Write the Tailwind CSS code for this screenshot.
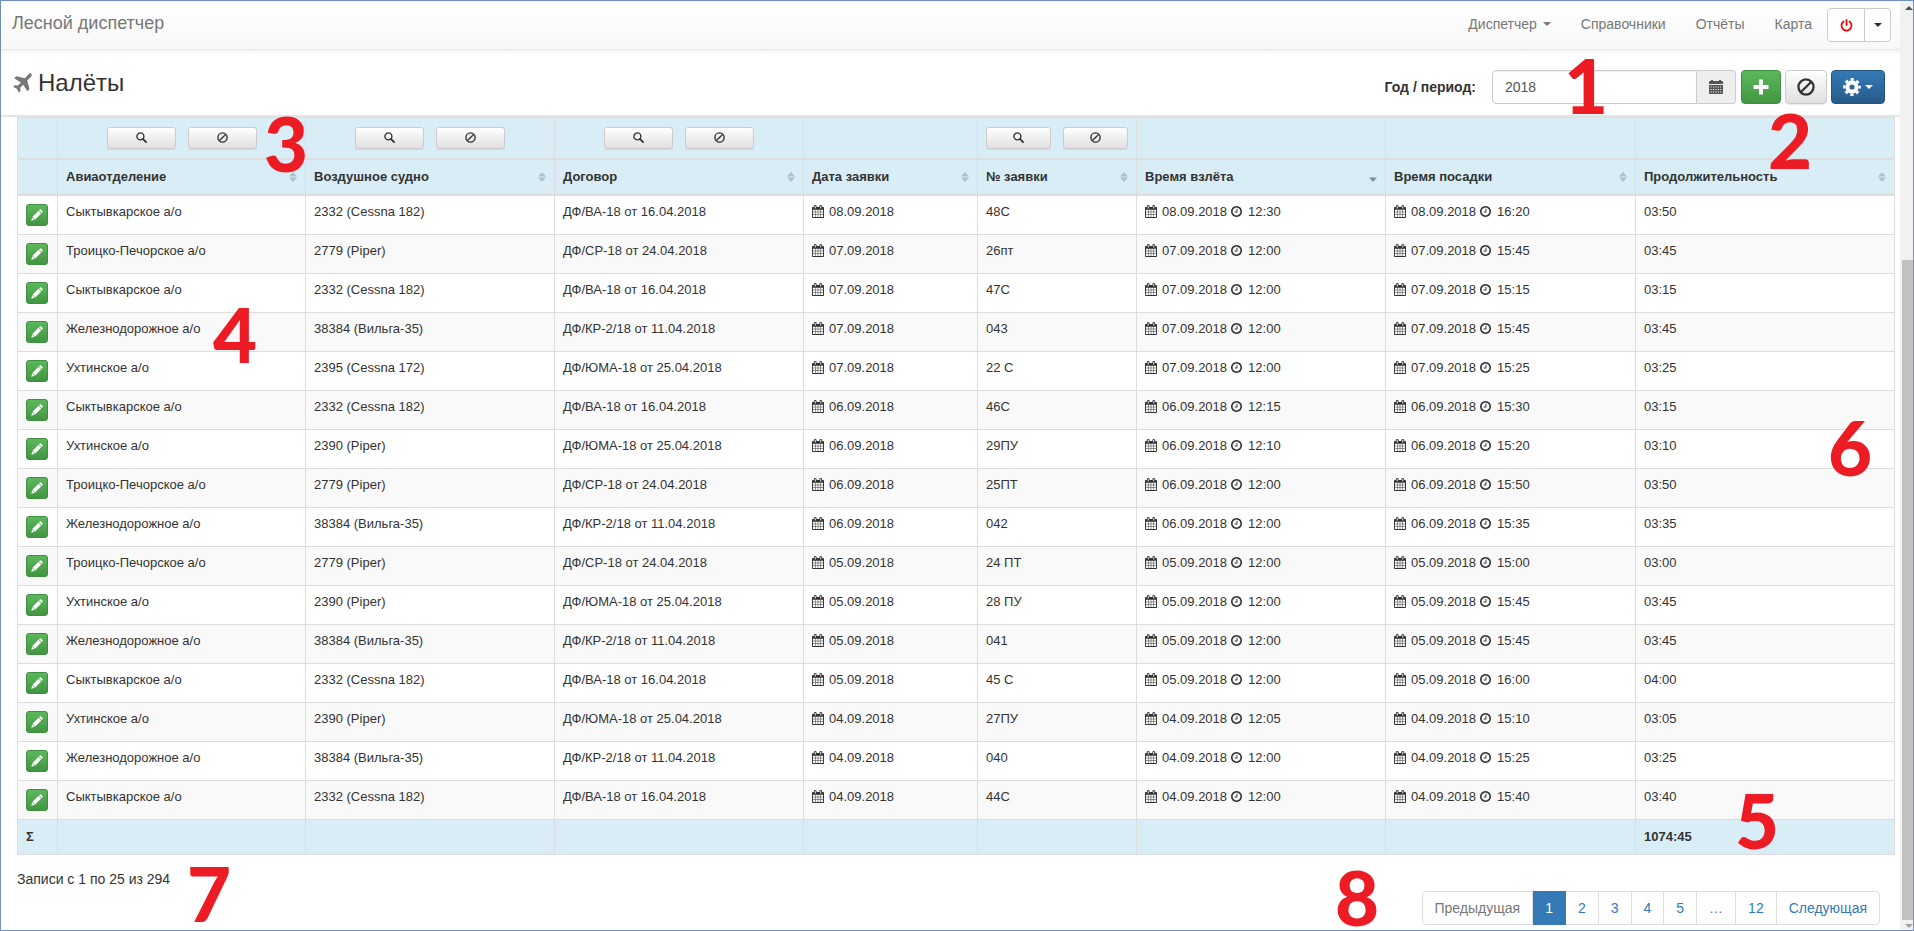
<!DOCTYPE html>
<html lang="ru">

<head>
    <meta charset="UTF-8">
    <meta name="viewport" content="width=device-width, initial-scale=1.0">
    <title>Лесной диспетчер - Налёты</title>
    <script src="https://cdn.jsdelivr.net/npm/@tailwindcss/browser@4"></script>
</head>

<body class="bg-white font-['Liberation_Sans',Arial,sans-serif] text-sm leading-5 text-[#333]">
    <!-- Icons -->
    <svg class="hidden" xmlns="http://www.w3.org/2000/svg">
        <symbol id="i-calendar" viewBox="64 0 1664 1792">
            <path fill="currentColor"
                d="M192 1664h288v-288h-288v288zm352 0h320v-288h-320v288zm-352-352h288v-320h-288v320zm352 0h320v-320h-320v320zm-352-384h288v-288h-288v288zm736 736h320v-288h-320v288zm-384-736h320v-288h-320v288zm768 736h288v-288h-288v288zm-384-352h320v-320h-320v320zm-352-864v-288q0-13-9.500-22.500t-22.500-9.500h-64q-13 0-22.500 9.500t-9.500 22.500v288q0 13 9.500 22.500t22.500 9.500h64q13 0 22.500-9.500t9.500-22.500zm736 864h288v-320h-288v320zm-384-384h320v-288h-320v288zm384 0h288v-288h-288v288zm32-480v-288q0-13-9.500-22.500t-22.500-9.500h-64q-13 0-22.500 9.500t-9.500 22.500v288q0 13 9.500 22.500t22.500 9.500h64q13 0 22.500-9.500t9.500-22.500zm384-64v1280q0 52-38 90t-90 38h-1408q-52 0-90-38t-38-90v-1280q0-52 38-90t90-38h128v-96q0-66 47-113t113-47h64q66 0 113 47t47 113v96h384v-96q0-66 47-113t113-47h64q66 0 113 47t47 113v96h128q52 0 90 38t38 90z" />
        </symbol>
        <symbol id="i-clock" viewBox="128 128 1536 1536">
            <path fill="currentColor"
                d="M1024 544v448q0 14-9 23t-23 9h-320q-14 0-23-9t-9-23v-64q0-14 9-23t23-9h224v-352q0-14 9-23t23-9h64q14 0 23 9t9 23zm416 352q0-148-73-273t-198-198-273-73-273 73-198 198-73 273 73 273 198 198 273 73 273-73 198-198 73-273zm224 0q0 209-103 385.500t-279.500 279.500-385.500 103-385.500-103-279.500-279.500-103-385.500 103-385.500 279.500-279.500 385.500-103 385.500 103 279.500 279.500 103 385.500z" />
        </symbol>
        <symbol id="i-pencil" viewBox="0 0 12 12">
            <path fill="currentColor"
                d="M8 1.300 8.900.5q.6-.6 1.200 0l1.400 1.400q.6.600 0 1.200l-.8.900zM7.500 1.800l2.700 2.700-6 6-2.700-2.700zM1.200 8.300l2.500 2.500-3.400.9z" />
        </symbol>
        <symbol id="i-search" viewBox="0 0 12 12">
            <circle cx="4.800" cy="4.800" r="3.800" fill="none" stroke="currentColor" stroke-width="1.500" />
            <path d="M7.500 7.500 11 11" stroke="currentColor" stroke-width="2" stroke-linecap="round" />
        </symbol>
        <symbol id="i-ban" viewBox="0 0 16 16">
            <circle cx="8" cy="8" r="6.700" fill="none" stroke="currentColor" stroke-width="2" />
            <path d="M3.500 12.500 12.500 3.500" stroke="currentColor" stroke-width="2" />
        </symbol>
        <symbol id="i-sort" viewBox="0 0 8 10">
            <path fill="currentColor" d="M0 4.500 4 0l4 4.500zM0 5.500h8L4 10z" />
        </symbol>
        <symbol id="i-sort-desc" viewBox="0 0 8 10">
            <path fill="currentColor" d="M0 5.500h8L4 10z" />
        </symbol>
        <symbol id="i-caret" viewBox="0 0 8 4">
            <path fill="currentColor" d="M0 0h8L4 4z" />
        </symbol>
    </svg>

    <div class="relative flex min-h-screen border border-[#6f92c2]">
        <div class="min-w-0 flex-1">
            <!-- Navbar -->
            <nav
                class="flex h-[49px] items-center justify-between border-b border-[#e7e7e7] bg-linear-to-b from-white to-[#f8f8f8] pr-[9px] pl-[11px] text-[#777] shadow-[0_1px_5px_rgba(0,0,0,0.075)]">
                <a href="#" class="pb-1 text-lg">Лесной диспетчер</a>
                <div class="flex items-center">
                    <a href="#" class="flex items-center gap-1.5 px-[15px] pb-0.5">Диспетчер
                        <svg class="h-1 w-2">
                            <use href="#i-caret" />
                        </svg>
                    </a>
                    <a href="#" class="px-[15px] pb-0.5">Справочники</a>
                    <a href="#" class="px-[15px] pb-0.5">Отчёты</a>
                    <a href="#" class="px-[15px] pb-0.5">Карта</a>
                    <div class="flex h-[34px] rounded border border-[#ccc] bg-white">
                        <button type="button" aria-label="Выход"
                            class="flex w-[37px] items-center justify-center border-r border-[#ccc] text-[#f00]">
                            <svg class="size-[13px]" viewBox="0 0 13 13" fill="none" stroke="currentColor"
                                stroke-width="1.800" stroke-linecap="round">
                                <path d="M6.500 1v5M3.600 2.500a5 5 0 1 0 5.800 0" />
                            </svg>
                        </button>
                        <button type="button" aria-label="Меню"
                            class="flex w-[25px] items-center justify-center text-[#333]">
                            <svg class="h-1 w-2">
                                <use href="#i-caret" />
                            </svg>
                        </button>
                    </div>
                </div>
            </nav>

            <!-- Page header -->
            <header class="flex h-[67px] items-center justify-between border-b-2 border-[#e5e5e5] pr-[15px] pl-[11px]">
                <h1 class="flex items-center gap-1.5 text-2xl">
                    <svg class="size-5 text-[#777]" viewBox="0 0 20 20">
                        <path fill="currentColor"
                            d="M19.300.7c.9.9.500 2.200-.3 3l-3.700 3.700 2.200 8.600-2 2.200-4.300-6.400-3 3 .3 3.200-1.600 1.700-2-3.900L1 13.800l1.700-1.600 3.200.3 3-3L2.200 5.200 4.300 3.200l8.600 2 3.500-3.700c.8-.8 2.100-1.600 2.900-.8z" />
                    </svg>
                    Налёты
                </h1>
                <div class="flex items-center pt-2">
                    <label for="period" class="mr-4 font-bold">Год / период:</label>
                    <input id="period" type="text" value="2018"
                        class="h-[34px] w-[205px] rounded-l border border-[#ccc] px-3 text-[#555] shadow-[inset_0_1px_1px_rgba(0,0,0,0.075)]">
                    <button type="button" aria-label="Календарь"
                        class="mr-[5px] flex h-[34px] w-[39px] items-center justify-center rounded-r border border-l-0 border-[#ccc] bg-[#eee] text-[#555]">
                        <svg class="size-3.5" viewBox="0 0 14 14">
                            <path fill="currentColor"
                                d="M0 2q0-1 1-1h1V0h2v1h6V0h2v1h1q1 0 1 1v2H0zM0 5h14v8q0 1-1 1H1q-1 0-1-1z" />
                            <path d="M1.500 7h11M1.500 9.500h11M1.500 12h11" stroke="#eee" stroke-width="1"
                                stroke-dasharray="1.200 1.200" />
                        </svg>
                    </button>
                    <button type="button" aria-label="Добавить"
                        class="mr-1 flex h-[34px] w-10 items-center justify-center rounded border border-[#3e8f3e] bg-linear-to-b from-[#5cb85c] to-[#419641] text-white">
                        <svg class="size-4" viewBox="0 0 16 16">
                            <path fill="currentColor" d="M6 .5h4V6h5.500v4H10v5.500H6V10H.5V6H6z" />
                        </svg>
                    </button>
                    <button type="button" aria-label="Очистить"
                        class="mr-1 flex h-[34px] w-[42px] items-center justify-center rounded border border-[#ccc] bg-linear-to-b from-white to-[#e0e0e0] shadow-[0_1px_1px_rgba(0,0,0,0.075)]">
                        <svg class="size-[18px]">
                            <use href="#i-ban" />
                        </svg>
                    </button>
                    <button type="button" aria-label="Настройки"
                        class="flex h-[34px] w-[54px] items-center justify-center gap-1 rounded border border-[#245580] bg-linear-to-b from-[#337ab7] to-[#265a88] text-white">
                        <svg class="size-[18px]" viewBox="0 0 16 16" fill="none" stroke="currentColor">
                            <circle cx="8" cy="8" r="4.100" stroke-width="3.600" />
                            <circle cx="8" cy="8" r="6.800" stroke-width="2.200" stroke-dasharray="2.870 2.470"
                                stroke-dashoffset="1.430" />
                        </svg>
                        <svg class="h-1 w-2">
                            <use href="#i-caret" />
                        </svg>
                    </button>
                </div>
            </header>

            <main class="pr-[5px] pl-4">
                <table class="w-full table-fixed border-collapse text-[13px] leading-4">
                    <colgroup>
                        <col class="w-10">
                        <col class="w-[248px]">
                        <col class="w-[249px]">
                        <col class="w-[249px]">
                        <col class="w-[174px]">
                        <col class="w-[159px]">
                        <col class="w-[249px]">
                        <col class="w-[250px]">
                        <col class="w-[259px]">
                    </colgroup>
                    <thead class="bg-[#d9edf7] text-left">
                        <tr id="filters"></tr>
                        <tr id="titles"></tr>
                    </thead>
                    <tbody id="rows"></tbody>
                    <tfoot class="bg-[#d9edf7] text-left font-bold">
                        <tr class="h-[35px]">
                            <td class="border border-[#ddd] px-2">Σ</td>
                            <td class="border border-[#ddd]"></td>
                            <td class="border border-[#ddd]"></td>
                            <td class="border border-[#ddd]"></td>
                            <td class="border border-[#ddd]"></td>
                            <td class="border border-[#ddd]"></td>
                            <td class="border border-[#ddd]"></td>
                            <td class="border border-[#ddd]"></td>
                            <td class="border border-[#ddd] px-2">1074:45</td>
                        </tr>
                    </tfoot>
                </table>

                <p class="pt-3.5">Записи с 1 по 25 из 294</p>
                <nav class="mt-0.5 flex justify-end pr-[15px]">
                    <div class="flex divide-x divide-[#ddd] rounded border border-[#ddd] text-[#337ab7]">
                        <a href="#" class="px-3 py-1.5 text-[#777]">Предыдущая</a>
                        <a href="#" class="-my-px border-[#337ab7] bg-[#337ab7] px-3 py-[7px] text-white">1</a>
                        <a href="#" class="px-3 py-1.5">2</a>
                        <a href="#" class="px-3 py-1.5">3</a>
                        <a href="#" class="px-3 py-1.5">4</a>
                        <a href="#" class="px-3 py-1.5">5</a>
                        <span class="px-3 py-1.5 text-[#777]">…</span>
                        <a href="#" class="px-3 py-1.5">12</a>
                        <a href="#" class="px-3 py-1.5">Следующая</a>
                    </div>
                </nav>
            </main>
        </div>

        <!-- Scrollbar -->
        <div class="flex w-[13px] flex-col items-end bg-[#f1f1f1]">
            <svg class="mt-[5px] h-1 w-2 rotate-180 text-[#505050]">
                <use href="#i-caret" />
            </svg>
            <div class="mt-auto mb-1 h-[71%] w-[11px] bg-[#c1c1c1]"></div>
            <svg class="mb-0.5 h-1 w-2 text-[#a3a3a3]">
                <use href="#i-caret" />
            </svg>
        </div>

        <!-- Callout numbers -->
        <div class="pointer-events-none font-['Lato',sans-serif] text-[76px] leading-[60px] font-black text-[#ed1c24]">
            <span class="absolute top-[54px] left-[1563px]">1</span>
            <span class="absolute top-[109px] left-[1767px]">2</span>
            <span class="absolute top-[112px] left-[263px]">3</span>
            <span class="absolute top-[303px] left-[212px]">4</span>
            <span class="absolute top-[789px] left-[1734px]">5</span>
            <span class="absolute top-[416px] left-[1827px]">6</span>
            <span class="absolute top-[862px] left-[186px]">7</span>
            <span class="absolute top-[866px] left-[1334px]">8</span>
        </div>
    </div>

    <script>
        const columns = [
            { title: '' },
            { title: 'Авиаотделение', filter: true },
            { title: 'Воздушное судно', filter: true },
            { title: 'Договор', filter: true },
            { title: 'Дата заявки' },
            { title: '№ заявки', filter: true },
            { title: 'Время взлёта', sorted: true },
            { title: 'Время посадки' },
            { title: 'Продолжительность' }
        ];

        const S = 'Сыктывкарское а/о', T = 'Троицко-Печорское а/о', J = 'Железнодорожное а/о', U = 'Ухтинское а/о';
        const C182 = '2332 (Cessna 182)', P79 = '2779 (Piper)', V35 = '38384 (Вильга-35)', C172 = '2395 (Cessna 172)', P90 = '2390 (Piper)';
        const VA = 'ДФ/ВА-18 от 16.04.2018', SR = 'ДФ/СР-18 от 24.04.2018', KR = 'ДФ/КР-2/18 от 11.04.2018', UMA = 'ДФ/ЮМА-18 от 25.04.2018';

        const flights = [
            [S, C182, VA, '08.09.2018', '48С', '12:30', '16:20', '03:50'],
            [T, P79, SR, '07.09.2018', '26пт', '12:00', '15:45', '03:45'],
            [S, C182, VA, '07.09.2018', '47С', '12:00', '15:15', '03:15'],
            [J, V35, KR, '07.09.2018', '043', '12:00', '15:45', '03:45'],
            [U, C172, UMA, '07.09.2018', '22 С', '12:00', '15:25', '03:25'],
            [S, C182, VA, '06.09.2018', '46С', '12:15', '15:30', '03:15'],
            [U, P90, UMA, '06.09.2018', '29ПУ', '12:10', '15:20', '03:10'],
            [T, P79, SR, '06.09.2018', '25ПТ', '12:00', '15:50', '03:50'],
            [J, V35, KR, '06.09.2018', '042', '12:00', '15:35', '03:35'],
            [T, P79, SR, '05.09.2018', '24 ПТ', '12:00', '15:00', '03:00'],
            [U, P90, UMA, '05.09.2018', '28 ПУ', '12:00', '15:45', '03:45'],
            [J, V35, KR, '05.09.2018', '041', '12:00', '15:45', '03:45'],
            [S, C182, VA, '05.09.2018', '45 С', '12:00', '16:00', '04:00'],
            [U, P90, UMA, '04.09.2018', '27ПУ', '12:05', '15:10', '03:05'],
            [J, V35, KR, '04.09.2018', '040', '12:00', '15:25', '03:25'],
            [S, C182, VA, '04.09.2018', '44С', '12:00', '15:40', '03:40']
        ];

        const filterButton = (icon, label) => `
            <button type="button" aria-label="${label}" class="flex h-[22px] w-[69px] items-center justify-center rounded-[3px] border border-[#ccc] bg-linear-to-b from-white to-[#e0e0e0] shadow-[0_1px_1px_rgba(0,0,0,0.075)]">
                <svg class="size-[11px]"><use href="#${icon}"/></svg>
            </button>`;

        document.getElementById('filters').innerHTML = columns.map(c => `
            <td class="h-[41px] border border-b-2 border-[#ddd] px-2">
                ${c.filter ? `<div class="flex justify-center gap-3">${filterButton('i-search', 'Найти')}${filterButton('i-ban', 'Сбросить')}</div>` : ''}
            </td>`).join('');

        document.getElementById('titles').innerHTML = columns.map(c => `
            <th class="h-9 border border-b-2 border-[#ddd] px-2">
                ${c.title ? `<div class="flex items-center justify-between">${c.title}
                    <svg class="h-2.5 w-2 ${c.sorted ? 'text-[#7f8f96]' : 'text-[#b0c0c8]'}"><use href="#${c.sorted ? 'i-sort-desc' : 'i-sort'}"/></svg>
                </div>` : ''}
            </th>`).join('');

        const cell = (html) => `<td class="border border-[#ddd] p-2 align-top">${html}</td>`;
        const date = (d) => `<svg class="h-[13px] w-3"><use href="#i-calendar"/></svg><span class="ml-[5px]">${d}</span>`;
        const time = (t) => `<svg class="ml-1 size-[11px]"><use href="#i-clock"/></svg><span class="ml-1.5">${t}</span>`;
        const stamp = (html) => `<div class="flex items-center">${html}</div>`;

        document.getElementById('rows').innerHTML = flights.map(([dept, plane, contract, day, number, start, end, total]) => `
            <tr class="even:bg-[#f9f9f9]">
                ${cell(`<button type="button" aria-label="Изменить" class="flex size-[22px] items-center justify-center rounded-[3px] border border-[#3e8f3e] bg-linear-to-b from-[#5cb85c] to-[#419641] text-white"><svg class="size-3"><use href="#i-pencil"/></svg></button>`)}
                ${cell(dept)}
                ${cell(plane)}
                ${cell(contract)}
                ${cell(stamp(date(day)))}
                ${cell(number)}
                ${cell(stamp(date(day) + time(start)))}
                ${cell(stamp(date(day) + time(end)))}
                ${cell(total)}
            </tr>`).join('');
    </script>
</body>

</html>
